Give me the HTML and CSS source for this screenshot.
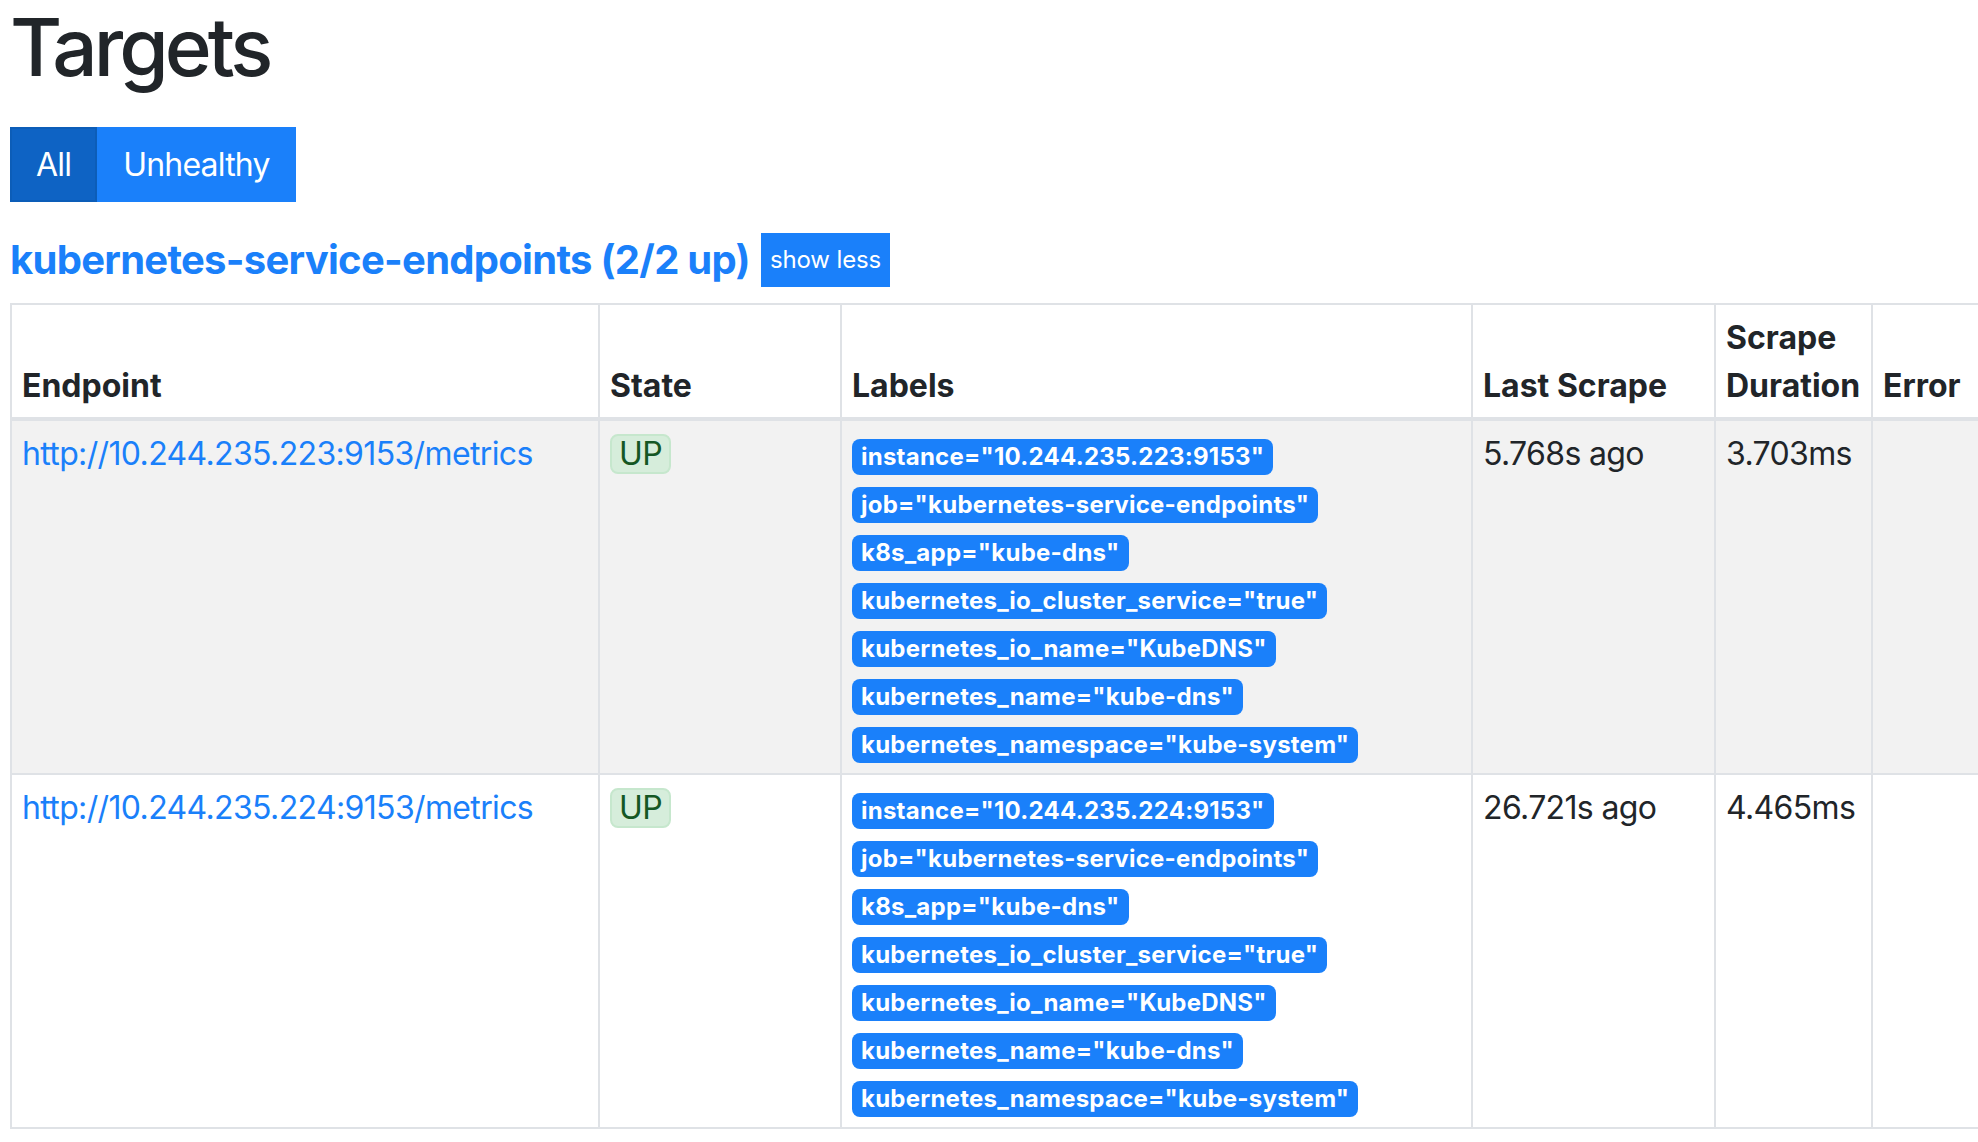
FILE: index.html
```html
<!DOCTYPE html>
<html lang="en">
<head>
<meta charset="utf-8">
<title>Targets</title>
<link rel="stylesheet" href="styles.css">
</head>
<body>
<h1 class="page-title">Targets</h1>
<div class="filter-group">
  <button class="btn btn-active">All</button><button class="btn">Unhealthy</button>
</div>
<section class="pool">
  <h3 class="pool-title">
    <a class="pool-link" href="#pool-kubernetes-service-endpoints">kubernetes-service-endpoints (2/2 up)</a>
    <button class="btn-xs">show less</button>
  </h3>
  <table class="targets">
    <thead>
      <tr>
        <th class="c-endpoint">Endpoint</th>
        <th class="c-state">State</th>
        <th class="c-labels">Labels</th>
        <th class="c-last">Last Scrape</th>
        <th class="c-dur">Scrape Duration</th>
        <th class="c-err">Error</th>
      </tr>
    </thead>
    <tbody>
      <tr class="row-odd">
        <td><a class="endpoint-link" href="#">http://10.244.235.223:9153/metrics</a></td>
        <td><span class="state-up">UP</span></td>
        <td>
          <div class="label-line"><span class="label-badge">instance="10.244.235.223:9153"</span></div>
          <div class="label-line"><span class="label-badge">job="kubernetes-service-endpoints"</span></div>
          <div class="label-line"><span class="label-badge">k8s_app="kube-dns"</span></div>
          <div class="label-line"><span class="label-badge">kubernetes_io_cluster_service="true"</span></div>
          <div class="label-line"><span class="label-badge">kubernetes_io_name="KubeDNS"</span></div>
          <div class="label-line"><span class="label-badge">kubernetes_name="kube-dns"</span></div>
          <div class="label-line"><span class="label-badge">kubernetes_namespace="kube-system"</span></div>
        </td>
        <td>5.768s ago</td>
        <td>3.703ms</td>
        <td></td>
      </tr>
      <tr>
        <td><a class="endpoint-link" href="#">http://10.244.235.224:9153/metrics</a></td>
        <td><span class="state-up">UP</span></td>
        <td>
          <div class="label-line"><span class="label-badge">instance="10.244.235.224:9153"</span></div>
          <div class="label-line"><span class="label-badge">job="kubernetes-service-endpoints"</span></div>
          <div class="label-line"><span class="label-badge">k8s_app="kube-dns"</span></div>
          <div class="label-line"><span class="label-badge">kubernetes_io_cluster_service="true"</span></div>
          <div class="label-line"><span class="label-badge">kubernetes_io_name="KubeDNS"</span></div>
          <div class="label-line"><span class="label-badge">kubernetes_name="kube-dns"</span></div>
          <div class="label-line"><span class="label-badge">kubernetes_namespace="kube-system"</span></div>
        </td>
        <td>26.721s ago</td>
        <td>4.465ms</td>
        <td></td>
      </tr>
    </tbody>
  </table>
</section>
</body>
</html>
```
FILE: styles.css
```css
html, body {
  overflow: hidden;
}
body {
  margin: 0;
  padding: 0 0 0 10px;
  background: #ffffff;
  color: #212529;
  font-family: Inter, "Noto Sans", "Liberation Sans", sans-serif;
  font-size: 32px;
  line-height: 48px;
  letter-spacing: -0.02em;
}
.page-title {
  margin: -1px 0 0;
  font-size: 80px;
  line-height: 96px;
  font-weight: 500;
  letter-spacing: -0.05em;
}
.filter-group {
  display: flex;
  margin-top: 32px;
}
.btn {
  font-family: inherit;
  font-size: 32px;
  line-height: 47px;
  letter-spacing: -0.025em;
  padding: 12px 24px;
  border: 2px solid #1a80fa;
  background: #1a80fa;
  color: #ffffff;
  border-radius: 0;
  margin: 0;
}
.btn-active {
  background: #0e63c4;
  border-color: #0c5db8;
}
.pool-title {
  display: flex;
  align-items: center;
  margin: 31px 0 16px;
  height: 54px;
  font-size: 40px;
  line-height: 54px;
  font-weight: 700;
  letter-spacing: -0.018em;
}
.pool-link {
  color: #1a80fa;
  text-decoration: none;
}
.btn-xs {
  margin-left: 11px;
  font-family: inherit;
  font-size: 24px;
  line-height: 36px;
  font-weight: 400;
  letter-spacing: -0.005em;
  padding: 7px 7px;
  border: 2px solid #1a80fa;
  background: #1a80fa;
  color: #ffffff;
  border-radius: 0;
}
.targets {
  border-collapse: collapse;
  table-layout: fixed;
  width: 2061px;
  border: 2px solid #dfe2e6;
}
.targets th,
.targets td {
  box-sizing: border-box;
  border: 2px solid #dfe2e6;
  padding: 9px 10px 7px;
  text-align: left;
}
.targets th {
  vertical-align: bottom;
  font-weight: 700;
  letter-spacing: 0;
  border-bottom-width: 4px;
}
.targets td {
  vertical-align: top;
}
.c-endpoint { width: 588px; }
.c-state { width: 242px; }
.c-labels { width: 631px; }
.c-last { width: 243px; }
.c-dur { width: 157px; }
.c-err { width: 200px; }
.row-odd td {
  background: #f2f2f2;
}
.endpoint-link {
  color: #1a80fa;
  text-decoration: none;
}
.state-up {
  display: inline-block;
  line-height: 32px;
  padding: 2px 7px;
  border: 2px solid #c6e7cd;
  border-radius: 8px;
  background: #d6eddb;
  color: #155724;
}
.label-line {
  line-height: 48px;
}
.label-badge {
  display: inline-block;
  font-size: 24px;
  line-height: 1;
  font-weight: 700;
  padding: 6px 9px;
  border-radius: 8px;
  background: #1a80fa;
  color: #ffffff;
  letter-spacing: 0.01em;
}
```
